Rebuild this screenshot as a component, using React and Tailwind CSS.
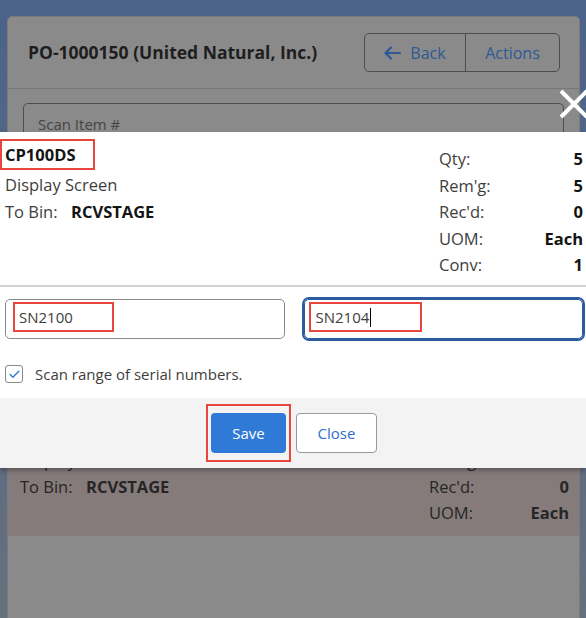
import { Check } from 'lucide-react'

const font = "font-['Open_Sans','Noto_Sans',sans-serif]"

const details = [
  ['Qty:', '5'],
  ["Rem'g:", '5'],
  ["Rec'd:", '0'],
  ['UOM:', 'Each'],
  ['Conv:', '1'],
]

function ReceiptPage() {
  return (
    <div className="ml-[7px] mr-[6px] mt-[16px] h-[640px] rounded-[5px] border border-[#7b7b7b] bg-[#8a8a8a]">
      <div className="flex h-[72px] items-center justify-between border-b border-[#777] pl-[20px] pr-[19px]">
        <h1 className="text-[17.5px] font-bold text-[#1e1e1e]">PO-1000150 (United Natural, Inc.)</h1>
        <div className="flex h-[39px] rounded-[5px] border border-[#4d4d4d] text-[16px] text-[#2d5a94]">
          <button className="flex w-[100px] items-center justify-center gap-[9px]">
            <svg width="17" height="14" viewBox="0 0 17 14" fill="none" stroke="currentColor" strokeWidth="2.2" strokeLinecap="round" strokeLinejoin="round">
              <path d="M16 7H1.5M7 1.5 1.5 7 7 12.5" />
            </svg>
            Back
          </button>
          <button className="w-[94px] border-l border-[#4d4d4d]">Actions</button>
        </div>
      </div>

      <div className="px-[15px] pt-[14px]">
        <div className="flex h-[42px] items-center rounded-[5px] border border-[#4d4d4d] px-[14px] text-[15px] text-[#454545]">
          Scan Item #
        </div>
      </div>

      <div className="mt-[268px] flex justify-between bg-[#857b7b] pb-[10px] pl-[12px] pr-[10px] pt-[9px] text-[16.5px] leading-[26px] text-[#262626]">
        <div>
          <div className="font-bold">CP100DS</div>
          <div>Display Screen</div>
          <div>
            <span className="inline-block w-[66px]">To Bin:</span>
            <span className="font-bold">RCVSTAGE</span>
          </div>
        </div>
        <div className="w-[140px]">
          {details.slice(0, 4).map(([label, value]) => (
            <div key={label} className="flex justify-between">
              <span>{label}</span>
              <span className="font-bold">{value}</span>
            </div>
          ))}
        </div>
      </div>
    </div>
  )
}

function SerialModal() {
  return (
    <>
      <button className="absolute right-[-3px] top-[89px]">
        <svg width="30" height="30" viewBox="0 0 30 30" stroke="white" strokeWidth="4">
          <path d="M2 2l26 26M28 2 2 28" />
        </svg>
      </button>

      <div className="absolute left-0 right-0 top-[132px] shadow-[0_3px_4px_rgba(0,0,0,0.25)]">
        <div className="flex h-[155px] justify-between border-b-2 border-[#d2d2d2] bg-white pr-[3px] pt-[7px] text-[16.5px] leading-[26.5px] text-[#3e3e3c]">
          <div>
            <div className="inline-block border-2 border-[#e8453c] pl-[3px] pr-[18px] pt-[1px] font-bold leading-[26px] text-[#141414]">
              CP100DS
            </div>
            <div className="pl-[5px] pt-[2px]">Display Screen</div>
            <div className="pl-[5px]">
              <span className="inline-block w-[66px]">To Bin:</span>
              <span className="font-bold text-[#141414]">RCVSTAGE</span>
            </div>
          </div>
          <div className="w-[144px] pt-[7px]">
            {details.map(([label, value]) => (
              <div key={label} className="flex justify-between">
                <span>{label}</span>
                <span className="font-bold text-[#141414]">{value}</span>
              </div>
            ))}
          </div>
        </div>

        <div className="h-[111px] bg-white pl-[5px] pr-[3px] pt-[12px] text-[15px] text-[#3e3e3c]">
          <div className="grid grid-cols-2 gap-[19px]">
            <div className="flex h-[40px] items-start rounded-[5px] border border-[#8a8a8a] pl-[7px] pt-[2px]">
              <span className="border-2 border-[#e8453c] pl-[4px] pr-[39px] leading-[26px]">SN2100</span>
            </div>
            <div className="flex h-[40px] items-start rounded-[5px] border border-[#2b5c9e] pl-[4px] pt-[2px] ring-2 ring-[#2b5c9e]">
              <span className="flex items-center border-2 border-[#e8453c] pl-[5px] pr-[49px] leading-[26px]">
                SN2104
                <span className="ml-[1px] h-[19px] w-px bg-black" />
              </span>
            </div>
          </div>
          <label className="mt-[24px] flex items-center gap-[12px]">
            <span className="flex h-[18px] w-[18px] items-center justify-center rounded-[3px] border border-[#8a8a8a] bg-white">
              <Check size={13} strokeWidth={2.5} className="text-[#2f7ad7]" />
            </span>
            Scan range of serial numbers.
          </label>
        </div>

        <div className="flex h-[70px] items-center justify-center gap-[5px] bg-[#f3f3f3] pr-[3px] text-[15px]">
          <div className="border-2 border-[#e8453c] px-[3px] py-[7px]">
            <button className="h-[40px] w-[75px] rounded-[4px] bg-[#2f7ad7] text-white">Save</button>
          </div>
          <button className="h-[40px] w-[81px] rounded-[4px] border border-[#9a9a9a] bg-white text-[#2e70d0]">Close</button>
        </div>
      </div>
    </>
  )
}

export default function App() {
  return (
    <div className={`relative h-[618px] w-[586px] overflow-hidden bg-gradient-to-b from-[#4b6389] to-[#66707e] ${font}`}>
      <ReceiptPage />
      <SerialModal />
    </div>
  )
}
